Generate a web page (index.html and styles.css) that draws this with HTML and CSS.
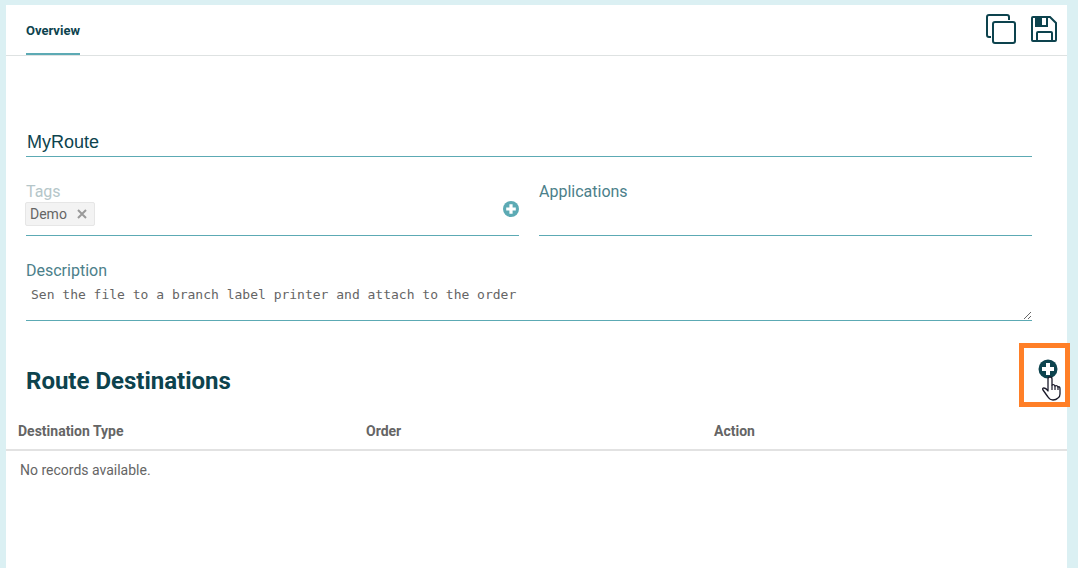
FILE: index.html
```html
<!DOCTYPE html>
<html lang="en">
<head>
    <meta charset="UTF-8">
    <meta name="viewport" content="width=device-width, initial-scale=1.0">
    <title>MyRoute</title>
    <link rel="stylesheet" href="styles.css">
</head>
<body>
    <main class="panel">
        <!-- Tabs and toolbar -->
        <header class="panel-header">
            <nav class="tabs">
                <a href="#overview" class="tab">Overview</a>
            </nav>
            <div class="toolbar">
                <button type="button" class="icon-button" aria-label="Copy">
                    <svg width="32" height="32" viewBox="0 0 32 32" fill="none" stroke="currentColor" stroke-width="2">
                        <rect x="8" y="8" width="22" height="21" rx="2"/>
                        <path d="M24 6V3q0-2-2-2H4Q2 1 2 3v18q0 2 2 2h2"/>
                    </svg>
                </button>
                <button type="button" class="icon-button" aria-label="Save">
                    <svg width="28" height="32" viewBox="0 0 28 32" fill="none" stroke="currentColor" stroke-width="2">
                        <path d="M3 3h17l6 6v17q0 1-1 1H3q-1 0-1-1V4q0-1 1-1z"/>
                        <path d="M7 27v-8q0-1 1-1h13q1 0 1 1v8M6 3v9h11V3"/>
                        <path d="M6 3h6v9H6z" fill="currentColor" stroke="none"/>
                    </svg>
                </button>
            </div>
        </header>

        <!-- Route details -->
        <form class="route-form" id="overview">
            <input type="text" class="name-input" value="MyRoute" aria-label="Name">

            <div class="field-row">
                <div class="field">
                    <span class="field-label muted">Tags</span>
                    <div class="tag-row">
                        <span class="tag">Demo
                            <button type="button" class="tag-remove" aria-label="Remove Demo">
                                <svg width="10" height="10" viewBox="0 0 10 10" stroke="currentColor" stroke-width="2"><path d="M1 1l8 8M9 1L1 9"/></svg>
                            </button>
                        </span>
                        <button type="button" class="icon-button add-tag" aria-label="Add tag">
                            <svg width="16" height="16" viewBox="0 0 20 20">
                                <circle cx="10" cy="10" r="10" fill="currentColor"/>
                                <path d="M10 4v12M4 10h12" stroke="#fff" stroke-width="4"/>
                            </svg>
                        </button>
                    </div>
                </div>
                <div class="field">
                    <label class="field-label" for="applications">Applications</label>
                    <input type="text" class="field-input" id="applications">
                </div>
            </div>

            <div class="description">
                <label class="field-label" for="description">Description</label>
                <textarea id="description" rows="2" spellcheck="false">Sen the file to a branch label printer and attach to the order</textarea>
            </div>
        </form>

        <!-- Destinations -->
        <section class="destinations">
            <div class="section-header">
                <h2>Route Destinations</h2>
                <div class="callout">
                    <button type="button" class="icon-button" aria-label="Add destination">
                        <svg width="20" height="20" viewBox="0 0 20 20">
                            <circle cx="10" cy="10" r="9.5" fill="currentColor"/>
                            <path d="M10 4v12M4 10h12" stroke="#fff" stroke-width="4"/>
                        </svg>
                    </button>
                    <svg class="cursor" width="19" height="25" viewBox="0 0 19 25">
                        <path d="M6 15V3q0-2 2-2t2 2v6q2-1 3 1 2-1 3 1 2-1 2 2v5q0 3-2 4-2 2-5 2t-5-3l-5-7q-1-2 1-2t4 3z" fill="#fff" stroke="#1a1a2a" stroke-width="1.3" stroke-linejoin="round"/>
                        <path d="M10 9v5M13 10v4M16 11v3" stroke="#1a1a2a" stroke-width="1.2"/>
                    </svg>
                </div>
            </div>
            <table>
                <thead>
                    <tr>
                        <th>Destination Type</th>
                        <th>Order</th>
                        <th class="action-col">Action</th>
                    </tr>
                </thead>
                <tbody>
                    <tr>
                        <td colspan="3">No records available.</td>
                    </tr>
                </tbody>
            </table>
        </section>
    </main>
</body>
</html>
```
FILE: styles.css
```css
* {
    box-sizing: border-box;
}
body {
    margin: 0;
    padding: 5px 11px 0 6px;
    min-height: 100vh;
    display: flex;
    background: #dbf0f3;
    color: #656565;
    font-family: Roboto, sans-serif;
    font-size: 14px;
}
button,
input,
textarea {
    border: 0;
    padding: 0;
    background: transparent;
    outline: none;
}
button {
    cursor: pointer;
}
svg {
    display: block;
}
.panel {
    flex: 1;
    background: #fff;
}
.panel-header {
    display: flex;
    justify-content: space-between;
    height: 51px;
    padding: 0 9px 0 20px;
    border-bottom: 1px solid #dee2e2;
}
.tabs {
    display: flex;
}
.tab {
    height: 50px;
    border-bottom: 2px solid #5caab4;
    color: #0d434e;
    font-size: 13px;
    font-weight: bold;
    line-height: 52px;
    text-decoration: none;
}
.toolbar {
    display: flex;
    align-items: center;
    gap: 13px;
}
.icon-button {
    color: #0d434e;
}
.route-form {
    padding: 72px 35px 0 20px;
}
.name-input {
    display: block;
    width: 100%;
    height: 29px;
    padding: 0 1px;
    border-bottom: 1px solid #5caab4;
    color: #0d434e;
    font-family: "Liberation Sans", sans-serif;
    font-size: 18px;
}
.field-row {
    display: grid;
    grid-template-columns: 1fr 1fr;
    gap: 20px;
    margin-top: 26px;
}
.field {
    height: 53px;
    border-bottom: 1px solid #5caab4;
}
.field-label {
    display: block;
    color: #4b808a;
    font-size: 16px;
    line-height: 18px;
}
.muted {
    color: #b5c6c9;
}
.field-input {
    width: 100%;
    height: 30px;
}
.tag-row {
    display: flex;
    justify-content: space-between;
    margin-left: -1px;
}
.tag {
    display: flex;
    align-items: center;
    gap: 10px;
    height: 24px;
    margin-top: 1px;
    padding: 0 7px 0 4px;
    border: 1px solid #e6e6e6;
    border-radius: 2px;
    background: #f3f3f3;
}
.tag-remove {
    color: #999;
}
.add-tag {
    align-self: flex-start;
    color: #5caab4;
}
.description {
    margin-top: 26px;
}
textarea {
    display: block;
    width: 100%;
    height: 41px;
    padding: 7px 5px 0;
    border-bottom: 1px solid #5caab4;
    color: #656565;
    font-family: "DejaVu Sans Mono", monospace;
    font-size: 13px;
    resize: vertical;
}
.section-header {
    display: flex;
    justify-content: space-between;
    padding: 22px 0 0 20px;
}
h2 {
    margin: 24px 0 0;
    color: #0d434e;
    font-size: 24px;
    line-height: 28px;
}
/* The frame reaches a little past the panel edge */
.callout {
    position: relative;
    width: 51px;
    height: 64px;
    margin-right: -3px;
    padding: 11px 0 0 14px;
    border: 5px solid #ff7f27;
}
.cursor {
    position: absolute;
    left: 18px;
    top: 28px;
    pointer-events: none;
}
table {
    width: 100%;
    table-layout: fixed;
    border-collapse: collapse;
}
th {
    height: 43px;
    padding: 6px 12px 0;
    border-bottom: 2px solid #e2e2e2;
    text-align: left;
}
.action-col {
    width: 365px;
}
td {
    height: 38px;
    padding: 0 14px;
}
```
